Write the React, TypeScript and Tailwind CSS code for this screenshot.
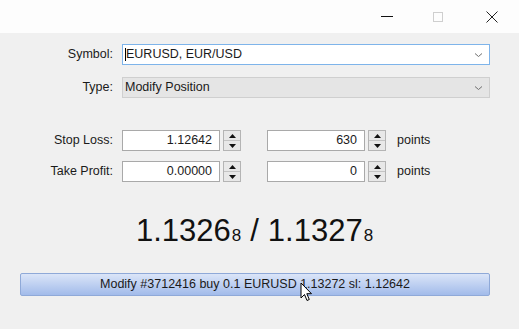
import React from "react";

const font = { fontFamily: '"Liberation Sans", Arial, sans-serif' };

function Chevron() {
  return (
    <svg width="9" height="6" viewBox="0 0 9 6" className="shrink-0">
      <path d="M1 1.5 L4.5 4.5 L8 1.5" fill="none" stroke="#707070" strokeWidth="1" />
    </svg>
  );
}

function Spin() {
  return (
    <div className="flex flex-col w-[18px] h-[21px] border border-[#b4b4b4] bg-[#e8e8e8]">
      <div className="flex-1 flex items-center justify-center border-b border-[#c4c4c4]">
        <svg width="7" height="4" viewBox="0 0 7 4"><path d="M0 4 L3.5 0 L7 4 Z" fill="#111" /></svg>
      </div>
      <div className="flex-1 flex items-center justify-center">
        <svg width="7" height="4" viewBox="0 0 7 4"><path d="M0 0 L3.5 4 L7 0 Z" fill="#111" /></svg>
      </div>
    </div>
  );
}

function NumInput({ value }: { value: string }) {
  return (
    <div className="flex items-center gap-[3px]">
      <div className="w-[98px] h-[21px] bg-white border border-[#a9a9a9] flex items-center justify-end pr-[7px] text-[12.5px] text-[#1a1a1a]">
        {value}
      </div>
      <Spin />
    </div>
  );
}

export default function App() {
  return (
    <div className="w-[519px] h-[329px] relative overflow-hidden bg-[#f0f0f0]" style={font}>
      <div className="h-[33px] bg-[#fdfdfd] flex items-center justify-end">
        <div className="w-[46px] flex justify-center">
          <div className="w-[12px] h-[1px] bg-[#111]" />
        </div>
        <div className="w-[46px] flex justify-center ml-[5px]">
          <div className="w-[10px] h-[10px] border border-[#cfcfcf]" />
        </div>
        <div className="w-[46px] flex justify-center ml-[8px] mr-[4px]">
          <svg width="12" height="12" viewBox="0 0 12 12">
            <path d="M0.5 0.5 L11.5 11.5 M11.5 0.5 L0.5 11.5" stroke="#222" strokeWidth="1" />
          </svg>
        </div>
      </div>

      <div className="flex flex-col pt-[11px] text-[12.5px] text-[#1a1a1a]">
        <div className="flex items-center">
          <div className="w-[113px] text-right">Symbol:</div>
          <div className="ml-[9px] w-[368px] h-[21px] bg-white border border-[#7eb4ea] flex items-center pl-[2px] pr-[6px]">
            <div className="w-[1px] h-[13px] bg-black" />
            <span className="flex-1">EURUSD, EUR/USD</span>
            <Chevron />
          </div>
        </div>
        <div className="flex items-center mt-[12px]">
          <div className="w-[113px] text-right">Type:</div>
          <div className="ml-[9px] w-[368px] h-[21px] bg-[#e5e5e5] border border-[#cfcfcf] flex items-center pl-[2px] pr-[6px]">
            <span className="flex-1">Modify Position</span>
            <Chevron />
          </div>
        </div>

        <div className="flex items-center mt-[32px]">
          <div className="w-[113px] text-right">Stop Loss:</div>
          <div className="ml-[9px]"><NumInput value="1.12642" /></div>
          <div className="ml-[26px]"><NumInput value="630" /></div>
          <span className="ml-[11px]">points</span>
        </div>
        <div className="flex items-center mt-[10px]">
          <div className="w-[113px] text-right">Take Profit:</div>
          <div className="ml-[9px]"><NumInput value="0.00000" /></div>
          <div className="ml-[26px]"><NumInput value="0" /></div>
          <span className="ml-[11px]">points</span>
        </div>

        <div className="flex justify-center items-baseline mt-[26px] h-[39px] pr-[10px] text-[#111]">
          <span className="text-[31px]">1.1326</span>
          <span className="text-[17px] ml-[1px]">8</span>
          <span className="text-[31px] ml-[9px]">/</span>
          <span className="text-[31px] ml-[9px]">1.1327</span>
          <span className="text-[17px] ml-[1px]">8</span>
        </div>

        <div className="mt-[26px] mx-[20px] w-[470px] h-[23px] border border-[#8fa9d8] rounded-[2px] bg-gradient-to-b from-[#dbe5f8] to-[#a2bbea] flex items-center justify-center text-[12.5px] text-[#1a1a1a]">
          Modify #3712416 buy 0.1 EURUSD 1.13272 sl: 1.12642
        </div>
      </div>

      <svg className="absolute left-[300px] top-[282px]" width="14" height="21" viewBox="0 0 14 21">
        <path d="M1 1 L1 16 L4.5 12.5 L7 18.5 L9.3 17.5 L6.8 11.7 L11.5 11.7 Z" fill="white" stroke="black" strokeWidth="1" strokeLinejoin="round" />
      </svg>
    </div>
  );
}
